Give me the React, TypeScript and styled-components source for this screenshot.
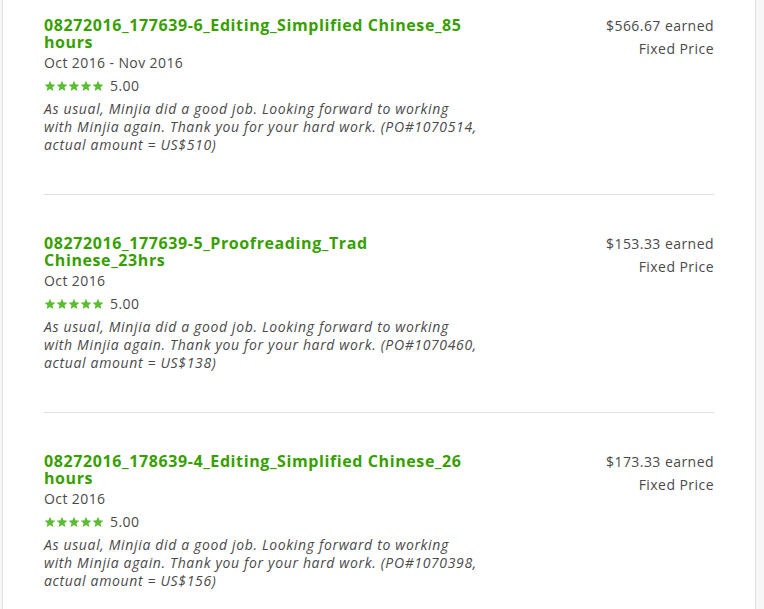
import React from "react";
import styled, { createGlobalStyle } from "styled-components";

const Global = createGlobalStyle`
  html, body { margin: 0; padding: 0; background: #f7f7f7; }
  body { font-family: "Open Sans", "Liberation Sans", sans-serif; }
`;

const Card = styled.div`
  margin-left: 2px;
  width: 754px;
  min-height: 609px;
  box-sizing: border-box;
  background: #fff;
  border-left: 1px solid #e0e0e0;
  border-right: 1px solid #e0e0e0;
  padding: 17px 41px 0 41px;
`;

const Item = styled.div`
  display: flex;
  justify-content: space-between;
  padding-bottom: 40px;
  & + & {
    border-top: 1px solid #e0e0e0;
    padding-top: 40px;
  }
`;

const Left = styled.div`
  width: 434px;
  display: flex;
  flex-direction: column;
`;

const Title = styled.div`
  color: #37a000;
  font-weight: 700;
  font-size: 16px;
  line-height: 17px;
  letter-spacing: 0.6px;
`;

const Dates = styled.div`
  margin-top: 3px;
  color: #4a4a4a;
  font-size: 14px;
  line-height: 18px;
  letter-spacing: 0.4px;
`;

const RatingRow = styled.div`
  margin-top: 5px;
  display: flex;
  align-items: center;
  gap: 6px;
  color: #4a4a4a;
  font-size: 14px;
  line-height: 18px;
  letter-spacing: 0.4px;
`;

const Stars = styled.div`
  display: flex;
`;

const Comment = styled.div`
  margin-top: 5px;
  color: #4a4a4a;
  font-style: italic;
  font-size: 14px;
  line-height: 18px;
  letter-spacing: 0.65px;
`;

const Right = styled.div`
  text-align: right;
  color: #4a4a4a;
  font-size: 14px;
  line-height: 18px;
  letter-spacing: 0.45px;
`;

const Earned = styled.div``;

const PriceType = styled.div`
  margin-top: 5px;
`;

const Star = () => (
  <svg width="12" height="12" viewBox="0 0 24 24">
    <path
      fill="#5bbd34"
      d="M12 1.5l3.1 7.1 7.7.7-5.8 5.1 1.7 7.6L12 18l-6.7 4 1.7-7.6-5.8-5.1 7.7-.7z"
    />
  </svg>
);

const items = [
  {
    title: "08272016_177639-6_Editing_Simplified Chinese_85 hours",
    dates: "Oct 2016 - Nov 2016",
    comment:
      "As usual, Minjia did a good job. Looking forward to working with Minjia again. Thank you for your hard work. (PO#1070514, actual amount = US$510)",
    earned: "$566.67 earned",
  },
  {
    title: "08272016_177639-5_Proofreading_Trad Chinese_23hrs",
    dates: "Oct 2016",
    comment:
      "As usual, Minjia did a good job. Looking forward to working with Minjia again. Thank you for your hard work. (PO#1070460, actual amount = US$138)",
    earned: "$153.33 earned",
  },
  {
    title: "08272016_178639-4_Editing_Simplified Chinese_26 hours",
    dates: "Oct 2016",
    comment:
      "As usual, Minjia did a good job. Looking forward to working with Minjia again. Thank you for your hard work. (PO#1070398, actual amount = US$156)",
    earned: "$173.33 earned",
  },
];

export default function App() {
  return (
    <>
      <Global />
      <Card>
        {items.map((it) => (
          <Item key={it.title}>
            <Left>
              <Title>{it.title}</Title>
              <Dates>{it.dates}</Dates>
              <RatingRow>
                <Stars>
                  {[0, 1, 2, 3, 4].map((i) => (
                    <Star key={i} />
                  ))}
                </Stars>
                5.00
              </RatingRow>
              <Comment>{it.comment}</Comment>
            </Left>
            <Right>
              <Earned>{it.earned}</Earned>
              <PriceType>Fixed Price</PriceType>
            </Right>
          </Item>
        ))}
      </Card>
    </>
  );
}
